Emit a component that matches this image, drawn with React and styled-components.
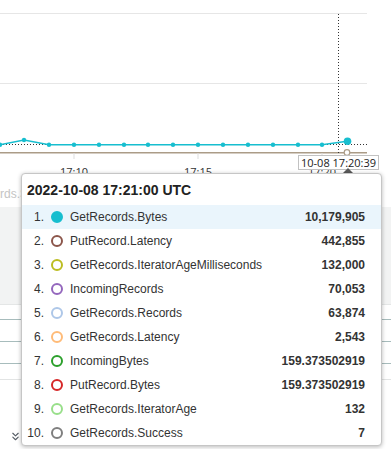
import React from 'react';
import styled, { createGlobalStyle } from 'styled-components';
import { ChevronsDown } from 'lucide-react';

const GlobalStyle = createGlobalStyle`
  html, body {
    margin: 0;
    padding: 0;
    background: #fff;
    font-family: "Liberation Sans", Arial, sans-serif;
    color: #333;
  }
`;

const Page = styled.div`
  position: relative;
  width: 391px;
  height: 449px;
  overflow: hidden;
  background: #fff;
`;

const ChartArea = styled.div`
  height: 207px;
  display: flex;
  flex-direction: column;
`;

const ChartSvg = styled.svg`
  display: block;
  width: 391px;
  height: 180px;
  font-family: "Open Sans", sans-serif;
`;

// legend sits behind the tooltip, only its tail shows at the left edge
const LegendClip = styled.div`
  width: 21px;
  overflow: hidden;
  margin-top: 7px;
`;

const LegendText = styled.div`
  font-size: 12px;
  color: #c4c4c4;
  white-space: nowrap;
`;

const Band = styled.div`
  height: 97px;
  background: #f2f3f3;
  border-bottom: 1px solid #e4e6e6;
`;

const Table = styled.div`
  display: flex;
  flex-direction: column;
`;

const TableRow = styled.div`
  height: ${({ h }) => h}px;
  border-bottom: 1px solid ${({ line }) => line};
`;

const Footer = styled.div`
  padding: 50px 0 0 9px;
  color: #545b64;
  display: flex;
`;

const CrossLabel = styled.div`
  position: absolute;
  left: 298px;
  top: 155px;
  height: 13px;
  padding: 0 2px;
  border: 1px solid #c2c2c2;
  background: #fff;
  font-family: "Open Sans", sans-serif;
  font-size: 11px;
  line-height: 13px;
  color: #222;
  white-space: nowrap;
`;

const Arrow = styled.div`
  position: absolute;
  left: 342px;
  top: 168px;
  width: 0;
  height: 0;
  border-left: 6px solid transparent;
  border-right: 6px solid transparent;
  border-bottom: 6px solid #5a5a5a;
`;

const Tooltip = styled.div`
  position: absolute;
  left: 21px;
  top: 173px;
  width: 359px;
  height: 271px;
  background: #fff;
  border: 1px solid #c6c6c6;
  border-radius: 4px;
  box-shadow: 0 1px 4px rgba(0, 0, 0, 0.28);
  overflow: hidden;
`;

const Title = styled.div`
  height: 31px;
  padding-left: 5px;
  font-size: 14px;
  font-weight: 700;
  line-height: 33px;
  color: #222;
`;

const Row = styled.div`
  display: flex;
  align-items: center;
  height: 24px;
  padding: 0 16px 0 5px;
  background: ${({ active }) => (active ? '#eaf5fc' : 'transparent')};
  font-size: 12px;
`;

const Index = styled.span`
  width: 17px;
  text-align: right;
  color: #333;
`;

const Dot = styled.span`
  box-sizing: border-box;
  width: 12px;
  height: 12px;
  margin: 0 7px;
  border-radius: 50%;
  border: 2.5px solid ${({ color }) => color};
  background: ${({ filled, color }) => (filled ? color : 'transparent')};
`;

const Name = styled.span`
  flex: 1;
  color: #333;
  white-space: nowrap;
`;

const Value = styled.span`
  font-weight: 700;
  color: #333;
`;

const series = [
  { name: 'GetRecords.Bytes', value: '10,179,905', color: '#17becf', filled: true },
  { name: 'PutRecord.Latency', value: '442,855', color: '#8c564b' },
  { name: 'GetRecords.IteratorAgeMilliseconds', value: '132,000', color: '#bcbd22' },
  { name: 'IncomingRecords', value: '70,053', color: '#9467bd' },
  { name: 'GetRecords.Records', value: '63,874', color: '#aec7e8' },
  { name: 'GetRecords.Latency', value: '2,543', color: '#ffbb78' },
  { name: 'IncomingBytes', value: '159.373502919', color: '#2ca02c' },
  { name: 'PutRecord.Bytes', value: '159.373502919', color: '#d62728' },
  { name: 'GetRecords.IteratorAge', value: '132', color: '#98df8a' },
  { name: 'GetRecords.Success', value: '7', color: '#7f7f7f' },
];

const xs = [0, 24, 49, 74, 99, 124, 148, 173, 198, 223, 248, 273, 298, 322];
const ys = xs.map((x) => (x === 24 ? 140 : 144.7));

const tableRows = [
  { h: 14, line: '#a7bcbc' },
  { h: 21, line: '#a7bcbc' },
  { h: 21, line: '#a7bcbc' },
  { h: 15, line: '#e2e4e4' },
];

function Chart() {
  const pts = xs.map((x, i) => `${x},${ys[i]}`).join(' ') + ' 347,141.3';
  return (
    <ChartSvg viewBox="0 0 391 180">
      <line x1="0" y1="13.5" x2="367" y2="13.5" stroke="#e6e6e6" strokeWidth="1" />
      <line x1="0" y1="83.5" x2="367" y2="83.5" stroke="#e6e6e6" strokeWidth="1" />
      <line x1="0" y1="152.7" x2="367" y2="152.7" stroke="#ab9c87" strokeWidth="1.5" />
      {[74, 198, 322].map((x) => (
        <line key={x} x1={x} y1="153" x2={x} y2="159" stroke="#ddd" strokeWidth="1" />
      ))}
      <line x1="0" y1="144.5" x2="367" y2="144.5" stroke="#333" strokeWidth="1" strokeDasharray="1 2" />
      <line x1="338.5" y1="14" x2="338.5" y2="156" stroke="#333" strokeWidth="1" strokeDasharray="1 2" />
      <polyline points={pts} fill="none" stroke="#17becf" strokeWidth="1.5" />
      {xs.map((x, i) => (
        <circle key={x} cx={x} cy={ys[i]} r="2.2" fill="#17becf" />
      ))}
      <circle cx="347.5" cy="141.3" r="3.8" fill="#17becf" />
      <circle cx="347" cy="152.5" r="2.8" fill="#fff" stroke="#ab9c87" strokeWidth="1.2" />
      {[
        [74, '17:10'],
        [198, '17:15'],
        [322, '17:20'],
      ].map(([x, t]) => (
        <text key={t} x={x} y="176" fontSize="11" textAnchor="middle" fill="#333">
          {t}
        </text>
      ))}
    </ChartSvg>
  );
}

export default function App() {
  return (
    <>
      <GlobalStyle />
      <Page>
        <ChartArea>
          <Chart />
          <LegendClip>
            <LegendText>rds.Success</LegendText>
          </LegendClip>
        </ChartArea>
        <Band />
        <Table>
          {tableRows.map((r, i) => (
            <TableRow key={i} h={r.h} line={r.line} />
          ))}
        </Table>
        <Footer>
          <ChevronsDown size={13} strokeWidth={2} />
        </Footer>

        <CrossLabel>10-08 17:20:39</CrossLabel>
        <Arrow />
        <Tooltip>
          <Title>2022-10-08 17:21:00 UTC</Title>
          {series.map((s, i) => (
            <Row key={s.name} active={i === 0}>
              <Index>{i + 1}.</Index>
              <Dot color={s.color} filled={s.filled} />
              <Name>{s.name}</Name>
              <Value>{s.value}</Value>
            </Row>
          ))}
        </Tooltip>
      </Page>
    </>
  );
}
